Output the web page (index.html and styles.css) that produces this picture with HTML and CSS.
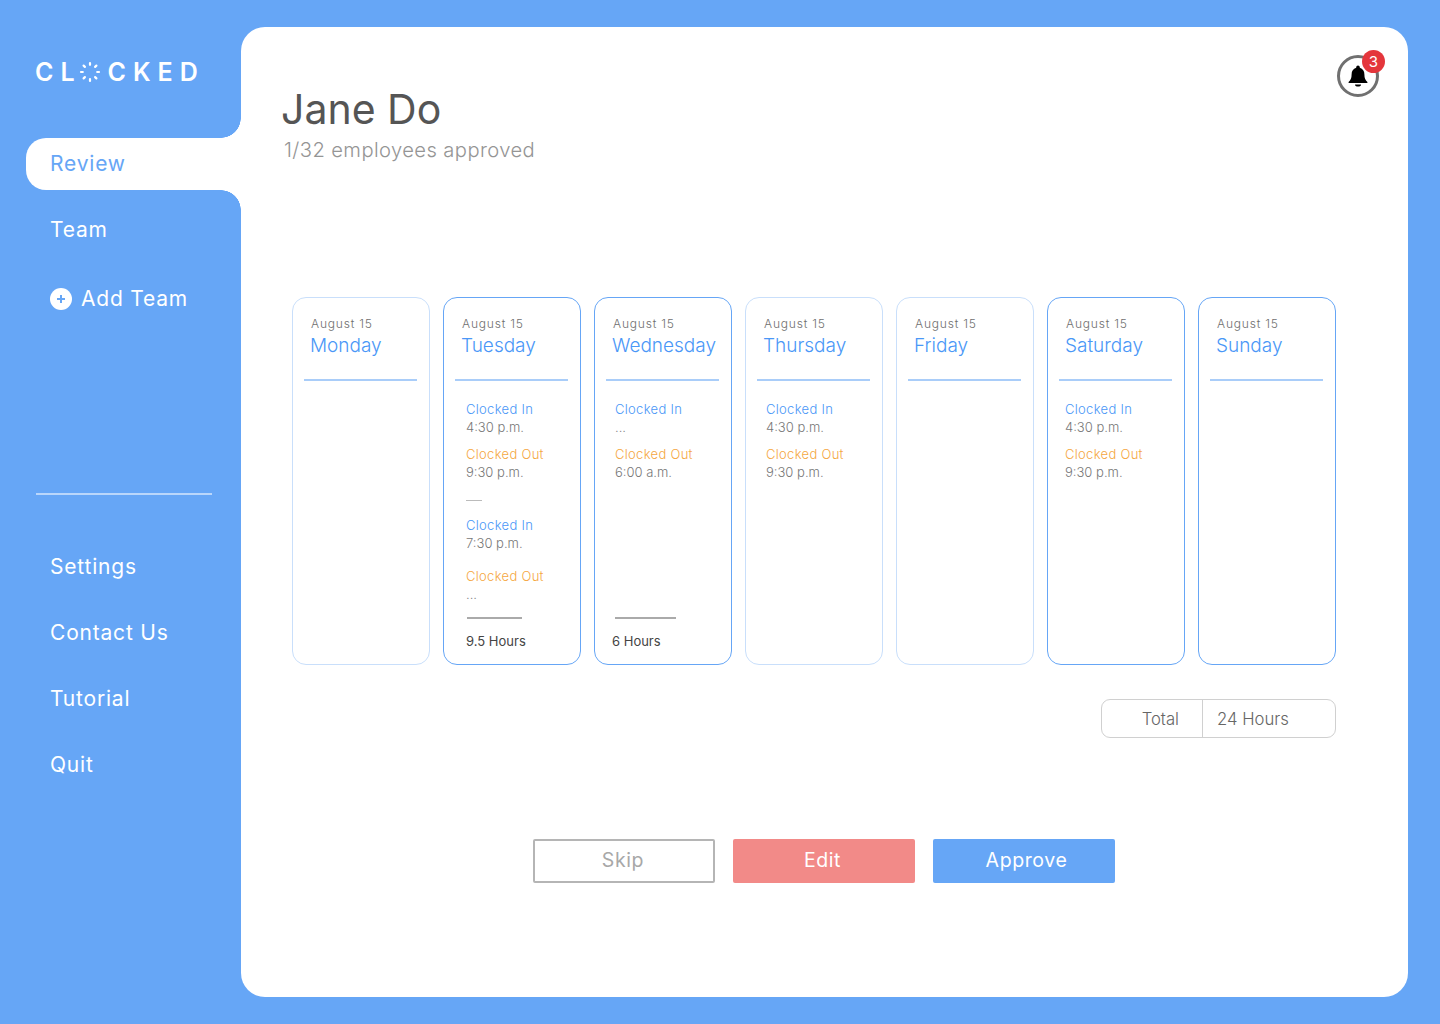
FILE: index.html
```html
<!DOCTYPE html>
<html lang="en">
<head>
    <meta charset="UTF-8">
    <title>Clocked - Review</title>
    <link rel="stylesheet" href="styles.css">
</head>
<body>
    <aside class="sidebar">
        <div class="logo">
            <span>CL</span>
            <svg class="logo-sun" width="22" height="22" viewBox="0 0 22 22" fill="none" stroke="#fff" stroke-width="2.200" stroke-linecap="round">
                <path d="M11 2v1.800M11 18.200V20M2 11h1.800M18.200 11H20M4.600 4.600l1.300 1.300M16.100 16.100l1.300 1.300M4.600 17.400l1.300-1.300M16.100 5.900l1.300-1.300"/>
            </svg>
            <span>CKED</span>
        </div>

        <nav class="nav nav-upper">
            <a class="nav-item nav-item-active">Review</a>
            <a class="nav-item">Team</a>
            <a class="nav-item nav-item-add">
                <svg width="22" height="22" viewBox="0 0 22 22">
                    <circle cx="11" cy="11" r="11" fill="#fff"/>
                    <path d="M11 7v8M7 11h8" stroke="#66a6f6" stroke-width="2"/>
                </svg>
                Add Team
            </a>
        </nav>

        <div class="sidebar-divider"></div>

        <nav class="nav nav-lower">
            <a class="nav-item">Settings</a>
            <a class="nav-item">Contact Us</a>
            <a class="nav-item">Tutorial</a>
            <a class="nav-item">Quit</a>
        </nav>
    </aside>

    <main class="panel">
        <header class="panel-header">
            <div>
                <h1>Jane Do</h1>
                <p class="subtitle">1/32 employees approved</p>
            </div>
            <div class="bell">
                <svg width="22" height="24" viewBox="0 0 22 24" fill="#000">
                    <path d="M11 1.500a1.800 1.800 0 0 1 1.800 1.800v.5c3 .8 4.600 3.400 4.600 6.600 0 3.600.8 5.400 3 7.600v1H1.600v-1c2.200-2.200 3-4 3-7.600 0-3.200 1.600-5.800 4.600-6.600v-.5A1.800 1.800 0 0 1 11 1.500z"/>
                    <path d="M8 20.500h6a3 2 0 0 1-6 0z"/>
                </svg>
                <span class="badge">3</span>
            </div>
        </header>

        <section class="week">
            <div class="day">
                <div class="day-head">
                    <div class="day-date">August 15</div>
                    <div class="day-name">Monday</div>
                </div>
            </div>

            <div class="day day-strong">
                <div class="day-head">
                    <div class="day-date">August 15</div>
                    <div class="day-name">Tuesday</div>
                </div>
                <div class="entries entries-tue">
                    <div class="entry">
                        <div class="in">Clocked In</div>
                        <div class="time">4:30 p.m.</div>
                    </div>
                    <div class="entry">
                        <div class="out">Clocked Out</div>
                        <div class="time">9:30 p.m.</div>
                    </div>
                    <div class="entry-break"></div>
                    <div class="entry">
                        <div class="in">Clocked In</div>
                        <div class="time">7:30 p.m.</div>
                    </div>
                    <div class="entry entry-last">
                        <div class="out">Clocked Out</div>
                        <div class="time">...</div>
                    </div>
                </div>
                <div class="hours hours-tue">9.5 Hours</div>
            </div>

            <div class="day day-strong">
                <div class="day-head">
                    <div class="day-date">August 15</div>
                    <div class="day-name">Wednesday</div>
                </div>
                <div class="entries">
                    <div class="entry">
                        <div class="in">Clocked In</div>
                        <div class="time">...</div>
                    </div>
                    <div class="entry">
                        <div class="out">Clocked Out</div>
                        <div class="time">6:00 a.m.</div>
                    </div>
                </div>
                <div class="hours">6 Hours</div>
            </div>

            <div class="day">
                <div class="day-head">
                    <div class="day-date">August 15</div>
                    <div class="day-name">Thursday</div>
                </div>
                <div class="entries">
                    <div class="entry">
                        <div class="in">Clocked In</div>
                        <div class="time">4:30 p.m.</div>
                    </div>
                    <div class="entry">
                        <div class="out">Clocked Out</div>
                        <div class="time">9:30 p.m.</div>
                    </div>
                </div>
            </div>

            <div class="day">
                <div class="day-head">
                    <div class="day-date">August 15</div>
                    <div class="day-name">Friday</div>
                </div>
            </div>

            <div class="day day-strong">
                <div class="day-head">
                    <div class="day-date">August 15</div>
                    <div class="day-name">Saturday</div>
                </div>
                <div class="entries entries-sat">
                    <div class="entry">
                        <div class="in">Clocked In</div>
                        <div class="time">4:30 p.m.</div>
                    </div>
                    <div class="entry">
                        <div class="out">Clocked Out</div>
                        <div class="time">9:30 p.m.</div>
                    </div>
                </div>
            </div>

            <div class="day day-strong">
                <div class="day-head">
                    <div class="day-date">August 15</div>
                    <div class="day-name">Sunday</div>
                </div>
            </div>
        </section>

        <div class="total-row">
            <div class="total">
                <div class="total-label">Total</div>
                <div class="total-value">24 Hours</div>
            </div>
        </div>

        <div class="actions">
            <button class="btn btn-skip">Skip</button>
            <button class="btn btn-edit">Edit</button>
            <button class="btn btn-approve">Approve</button>
        </div>
    </main>
</body>
</html>
```

FILE: styles.css
```css
* {
    box-sizing: border-box;
}

body {
    margin: 0;
    height: 1024px;
    display: flex;
    overflow: hidden;
    background-color: #66a6f6;
    font-family: "Inter", "Liberation Sans", sans-serif;
    color: #fff;
}

/* Sidebar */
.sidebar {
    width: 241px;
    flex-shrink: 0;
    padding-top: 60px;
}

.logo {
    display: flex;
    align-items: center;
    height: 24px;
    margin-left: 35px;
    font-size: 25px;
    font-weight: 600;
    letter-spacing: 7px;
    line-height: 24px;
}

.logo-sun {
    margin: 0 7px 0 -3px;
}

.nav {
    margin-left: 26px;
    display: flex;
    flex-direction: column;
}

.nav-upper {
    margin-top: 54px;
}

.nav-item {
    display: flex;
    align-items: center;
    gap: 9px;
    height: 66px;
    padding-left: 24px;
    padding-bottom: 2px;
    font-size: 21px;
    letter-spacing: 0.8px;
    white-space: nowrap;
}

.nav-upper .nav-item {
    padding-bottom: 1px;
}

.nav-item-active {
    position: relative;
    height: 52px;
    margin-bottom: 7px;
    background-color: #fff;
    border-radius: 20px 0 0 20px;
    color: #66a6f6;
}

/* Вогнутые углы у активного пункта */
.nav-item-active::before,
.nav-item-active::after {
    content: '';
    position: absolute;
    right: 0;
    width: 20px;
    height: 20px;
    background: radial-gradient(circle at 0 0, #66a6f6 19.5px, #fff 20px);
}

.nav-item-active::before {
    top: -20px;
}

.nav-item-active::after {
    bottom: -20px;
    background: radial-gradient(circle at 0 100%, #66a6f6 19.5px, #fff 20px);
}

.nav-item-add {
    height: 72px;
}

.sidebar-divider {
    height: 2px;
    width: 176px;
    margin: 158px 0 39px 36px;
    background-color: #b9d6fb;
}

/* Main panel */
.panel {
    width: 1167px;
    height: 970px;
    margin-top: 27px;
    background-color: #fff;
    border-radius: 24px;
    color: #555;
}

.panel-header {
    display: flex;
    justify-content: space-between;
    align-items: flex-start;
    height: 270px;
    padding: 28px 29px 0 40px;
}

h1 {
    margin: 28px 0 0;
    font-size: 41px;
    font-weight: 400;
    line-height: 52px;
    color: #555;
}

.subtitle {
    margin: 2px 0 0 3px;
    font-size: 20.200px;
    font-weight: 300;
    line-height: 26px;
    letter-spacing: 0.4px;
    color: #959595;
}

.bell {
    position: relative;
    display: flex;
    align-items: center;
    justify-content: center;
    width: 42px;
    height: 42px;
    border: 3px solid #707070;
    border-radius: 50%;
}

.badge {
    position: absolute;
    top: -8px;
    right: -9px;
    width: 23px;
    height: 23px;
    border-radius: 50%;
    background-color: #e4363c;
    color: #fff;
    font-size: 15px;
    line-height: 23px;
    text-align: center;
}

/* Week */
.week {
    display: flex;
    gap: 13px;
    margin-left: 51px;
}

.day {
    display: flex;
    flex-direction: column;
    width: 138px;
    height: 368px;
    padding: 0 12px 0 11px;
    border: 1px solid #c9dffb;
    border-radius: 14px;
}

.day-strong {
    border-color: #66a6f6;
}

.day-head {
    height: 83px;
    padding: 18px 0 0 6px;
    border-bottom: 2px solid #a9cdf9;
}

.day-date {
    padding-left: 1px;
    font-size: 12px;
    font-weight: 300;
    line-height: 15px;
    letter-spacing: 0.8px;
    color: #707070;
}

.day-name {
    margin-top: 2px;
    font-size: 19px;
    font-weight: 300;
    line-height: 26px;
    color: #4a97f7;
    white-space: nowrap;
}

.entries {
    padding: 19px 0 0 9px;
    font-size: 13px;
    font-weight: 300;
    line-height: 18px;
}

.entries-tue {
    padding-left: 11px;
}

.entries-sat {
    padding-left: 6px;
}

.entry {
    margin-bottom: 9px;
}

.entry-last {
    margin-top: 15px;
    margin-bottom: 0;
}

.entry-break {
    width: 16px;
    height: 1px;
    margin: 19px 0 15px;
    background-color: #bbb;
}

.in,
.out {
    letter-spacing: 0.3px;
}

.in {
    color: #4a97f7;
}

.out {
    color: #f5a742;
}

.time {
    color: #777;
}

.hours {
    margin: auto 0 14px 6px;
    padding-top: 15px;
    background: linear-gradient(#aaa, #aaa) no-repeat 3px 0 / 61px 2px;
    font-size: 13px;
    font-weight: 400;
    line-height: 18px;
    color: #444;
}

.hours-tue {
    margin-left: 11px;
    background-position: 1px 0;
    background-size: 55px 2px;
}

/* Total */
.total-row {
    display: flex;
    justify-content: flex-end;
    width: 1095px;
    margin-top: 34px;
}

.total {
    display: flex;
    width: 235px;
    height: 39px;
    border: 1px solid #d0d0d0;
    border-radius: 9px;
    font-size: 16.700px;
    font-weight: 300;
    line-height: 39px;
    color: #666;
}

.total-label {
    width: 101px;
    padding-right: 23px;
    border-right: 1px solid #d0d0d0;
    text-align: right;
}

.total-value {
    padding-left: 14px;
}

/* Buttons */
.actions {
    display: flex;
    justify-content: center;
    gap: 18px;
    margin-top: 101px;
    padding-right: 1px;
}

.btn {
    width: 182px;
    height: 44px;
    padding: 0 0 2px;
    border: none;
    border-radius: 2px;
    font-family: inherit;
    font-size: 19.500px;
    letter-spacing: 0.6px;
    color: #fff;
}

.btn-skip {
    padding-right: 2px;
    background-color: #fff;
    border: 2px solid #b5b5b5;
    color: #a8a8a8;
}

.btn-edit {
    padding-right: 3px;
    background-color: #f28a88;
}

.btn-approve {
    padding-left: 5px;
    background-color: #66a6f6;
}
```
